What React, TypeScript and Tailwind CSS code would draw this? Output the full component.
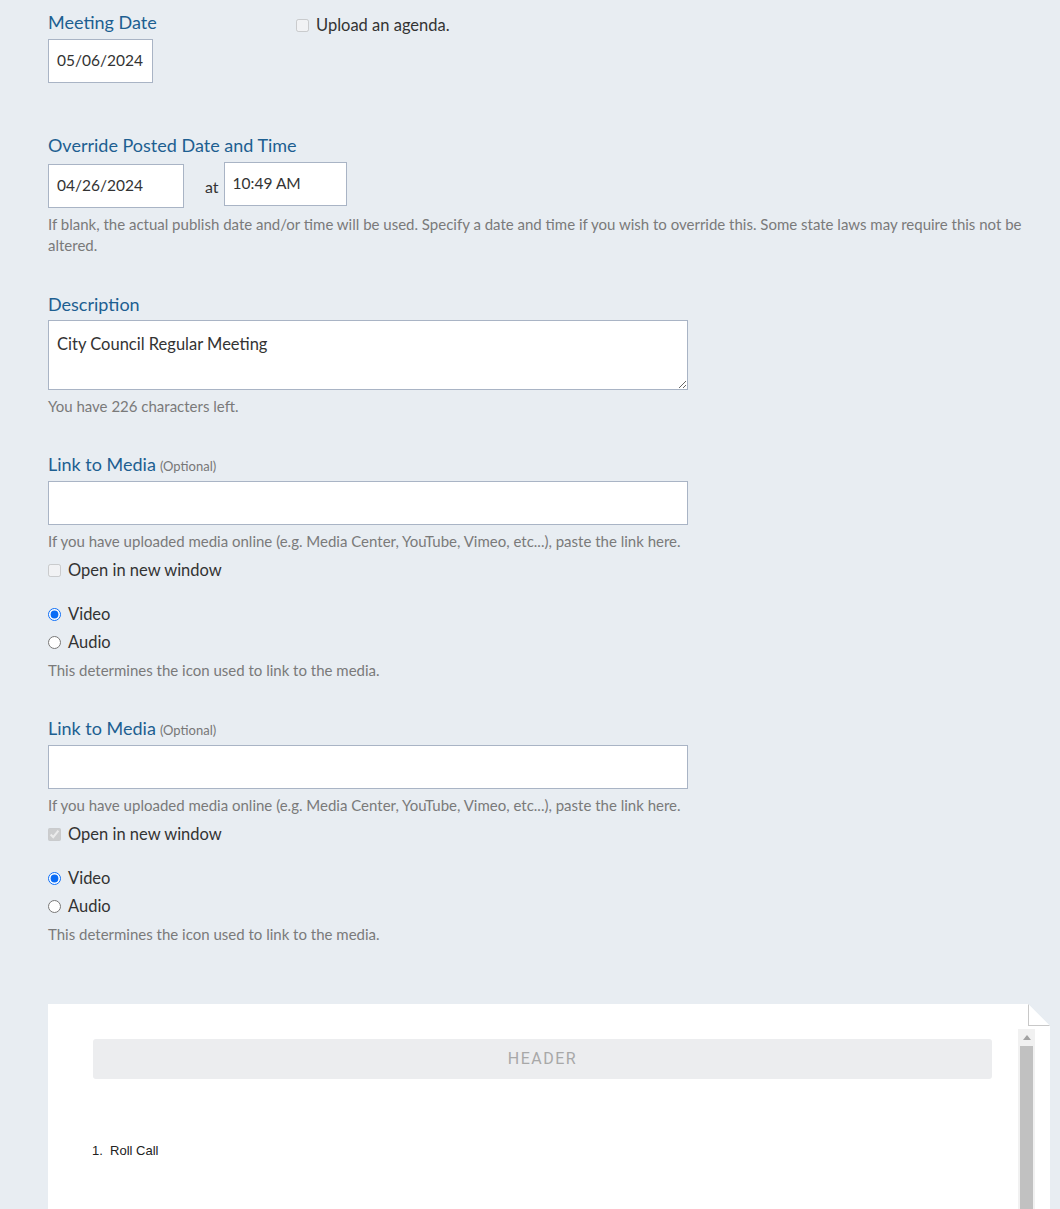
import type { ReactNode } from "react";

const font = { fontFamily: "Lato, 'Noto Sans', sans-serif" };

function Label({ children, optional }: { children: ReactNode; optional?: boolean }) {
  return (
    <div className="h-6 text-[18px] leading-6 text-[#1d5f91]">
      {children}
      {optional ? <span className="ml-1 text-[13px] text-[#777]">(Optional)</span> : null}
    </div>
  );
}

function Help({ children }: { children: ReactNode }) {
  return <p className="text-[15px] leading-[21px] text-[#7a7a7a]">{children}</p>;
}

function TextBox({ value, className }: { value?: string; className: string }) {
  return (
    <div
      className={`flex items-center border border-[#a9b4c5] bg-white px-2 text-[15.5px] text-[#333] ${className}`}
    >
      {value}
    </div>
  );
}

function MediaBlock({ checked }: { checked: boolean }) {
  const group = checked ? "media-type-2" : "media-type-1";
  return (
    <div>
      <Label optional>Link to Media</Label>
      <TextBox className="mt-[5px] h-[44px] w-[640px]" />
      <div className="mt-[6px]">
        <Help>
          If you have uploaded media online (e.g. Media Center, YouTube, Vimeo, etc...), paste the link here.
        </Help>
      </div>
      <label className="mt-[6px] flex h-6 items-center gap-[7px] text-[16.5px] text-[#333]">
        <input type="checkbox" disabled defaultChecked={checked} className="m-0 h-[13px] w-[13px]" />
        Open in new window
      </label>
      <div className="mt-[20px] flex flex-col gap-1">
        <label className="flex h-6 items-center gap-[7px] text-[16.5px] text-[#333]">
          <input type="radio" name={group} defaultChecked className="m-0 h-[13px] w-[13px] accent-[#0a6cf5]" />
          Video
        </label>
        <label className="flex h-6 items-center gap-[7px] text-[16.5px] text-[#333]">
          <input type="radio" name={group} className="m-0 h-[13px] w-[13px]" />
          Audio
        </label>
      </div>
      <div className="mt-[6px]">
        <Help>This determines the icon used to link to the media.</Help>
      </div>
    </div>
  );
}

export default function App() {
  return (
    <div className="h-[1209px] overflow-hidden bg-[#e8edf2] pl-12 pr-[10px] pt-[10px]" style={font}>
      <div className="flex">
        <div className="w-[248px]">
          <Label>Meeting Date</Label>
          <TextBox value="05/06/2024" className="mt-[5px] h-[44px] w-[105px]" />
        </div>
        <label className="mt-[3px] flex h-6 items-center gap-[7px] text-[16.5px] text-[#333]">
          <input type="checkbox" disabled className="m-0 h-[13px] w-[13px]" />
          Upload an agenda.
        </label>
      </div>

      <div className="mt-[50px]">
        <Label>Override Posted Date and Time</Label>
        <div className="mt-[7px] flex items-start">
          <TextBox value="04/26/2024" className="h-[44px] w-[136px]" />
          <span className="ml-[21px] mr-[5px] mt-[11px] text-[16px] text-[#333]">at</span>
          <TextBox value="10:49 AM" className="-mt-[2px] h-[44px] w-[123px]" />
        </div>
        <div className="mt-[6px] pr-4">
          <Help>
            If blank, the actual publish date and/or time will be used. Specify a date and time if you wish to
            override this. Some state laws may require this not be altered.
          </Help>
        </div>
      </div>

      <div className="mt-[36px]">
        <Label>Description</Label>
        <textarea
          readOnly
          defaultValue="City Council Regular Meeting"
          className="mt-[4px] block h-[70px] w-[640px] resize-y border border-[#a9b4c5] bg-white px-2 pt-[11px] text-[16.5px] text-[#333] outline-none"
          style={font}
        />
        <div className="mt-[6px]">
          <Help>You have 226 characters left.</Help>
        </div>
      </div>

      <div className="mt-[35px]">
        <MediaBlock checked={false} />
      </div>

      <div className="mt-[35px]">
        <MediaBlock checked />
      </div>

      <div className="relative mt-[59px] h-[260px] w-[1002px] bg-white">
        <div className="absolute right-0 top-0 h-[22px] w-[22px]">
          <div className="absolute inset-0 bg-[#e8edf2] [clip-path:polygon(0_0,100%_0,100%_100%)]" />
          <div className="absolute inset-0 border-b border-l border-[#c8c8c8] bg-white [clip-path:polygon(0_0,100%_100%,0_100%)]" />
        </div>
        <div className="absolute bottom-0 right-[15px] top-[25px] w-[17px] bg-[#f1f1f1]">
          <div className="mx-auto mt-[6px] h-0 w-0 border-x-[4px] border-b-[5px] border-x-transparent border-b-[#a3a3a3]" />
          <div className="mx-auto mt-[6px] h-[240px] w-[13px] bg-[#c1c1c1]" />
        </div>
        <div className="pl-[44px] pr-[58px] pt-[35px]">
          <div
            className="ml-px flex h-[40px] items-center justify-center rounded-[3px] bg-[#ecedef] text-[16px] tracking-[1.5px] text-[#a8a8a8]"
            style={{ fontFamily: "'Liberation Sans Narrow', 'Roboto', sans-serif" }}
          >
            HEADER
          </div>
          <div
            className="mt-[62px] text-[13px] text-[#222]"
            style={{ fontFamily: "'Liberation Sans Narrow', 'Liberation Sans', Arial, sans-serif" }}
          >
            1.&nbsp;&nbsp;Roll Call
          </div>
        </div>
      </div>
    </div>
  );
}
